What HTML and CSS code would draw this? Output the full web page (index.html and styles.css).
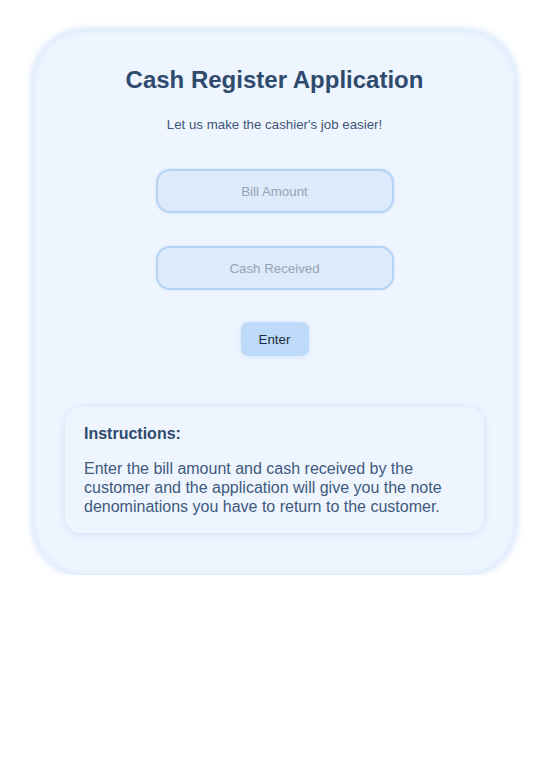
FILE: index.html
```html
<!DOCTYPE html>
<html>
<head>
<meta charset="utf-8">
<link rel="stylesheet" href="styles.css">
</head>
<body>
<main class="card">
  <h1 class="title">Cash Register Application</h1>
  <p class="subtitle">Let us make the cashier's job easier!</p>
  <div class="form">
    <input class="field" type="text" placeholder="Bill Amount">
    <input class="field" type="text" placeholder="Cash Received">
    <button class="btn" type="button">Enter</button>
  </div>
  <section class="info">
    <h2 class="info-title">Instructions:</h2>
    <p class="info-text">Enter the bill amount and cash received by the customer and the application will give you the note denominations you have to return to the customer.</p>
  </section>
</main>
</body>
</html>
```
FILE: styles.css
```css
* { box-sizing: border-box; }
body {
  margin: 0;
  background: #ffffff;
  font-family: "Liberation Sans", Arial, sans-serif;
}
.card {
  margin: 30px 0 0 33px;
  width: 483px;
  height: 545px;
  border-radius: 52px;
  background: #eef5ff;
  box-shadow: 0 0 7px 2px #d7e6fb, inset 0 0 5px 1px #dce9fb;
  padding: 36px 30px 0;
  display: flex;
  flex-direction: column;
  align-items: center;
}
.title {
  margin: 0;
  font-size: 24px;
  line-height: 28px;
  font-weight: 700;
  color: #2e4a6d;
}
.subtitle {
  margin: 23px 0 0;
  font-size: 13.3px;
  line-height: 16px;
  color: #3f5677;
}
.form {
  margin-top: 36px;
  display: flex;
  flex-direction: column;
  align-items: center;
}
.field {
  width: 238px;
  height: 44px;
  border-radius: 14px;
  border: 2px solid #b5d4f3;
  background: #dceafb;
  box-shadow: 0 0 3px #cfe2f8;
  text-align: center;
  font-family: "Liberation Sans", Arial, sans-serif;
  font-size: 13.3px;
  color: #2e4a6d;
  outline: none;
}
.field + .field { margin-top: 33px; }
.field::placeholder { color: #96a3b3; }
.btn {
  margin-top: 32px;
  width: 68px;
  height: 34px;
  border: none;
  border-radius: 7px;
  background: #bddbf9;
  box-shadow: 0 1px 6px #d3e4f8;
  font-family: "Liberation Sans", Arial, sans-serif;
  font-size: 13.3px;
  color: #1e2b3b;
}
.info {
  margin-top: 51px;
  width: 419px;
  height: 126px;
  border-radius: 16px;
  background: #eef5ff;
  box-shadow: 0 1px 6px 2px #dbe7fa;
  padding: 17px 19px 16px;
}
.info-title {
  margin: 0;
  font-size: 16px;
  line-height: 19px;
  font-weight: 700;
  color: #2e4a6d;
}
.info-text {
  margin: 16px 0 0;
  font-size: 16px;
  line-height: 19px;
  color: #3f5a7c;
}
```
